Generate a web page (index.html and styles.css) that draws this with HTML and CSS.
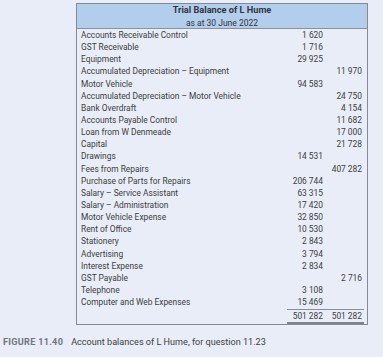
FILE: index.html
```html
<!DOCTYPE html>
<html>
<head>
<meta charset="utf-8">
<link rel="stylesheet" href="styles.css">
</head>
<body>
<div class="page">
  <div class="tb">
    <div class="tb-head">
      <div class="tb-title">Trial Balance of L Hume</div>
      <div class="tb-sub">as at 30 June 2022</div>
    </div>
    <div class="tb-body">
      <div class="row"><span class="lbl">Accounts Receivable Control</span><span class="dr">1 620</span><span class="cr"></span></div>
      <div class="row"><span class="lbl">GST Receivable</span><span class="dr">1 716</span><span class="cr"></span></div>
      <div class="row"><span class="lbl">Equipment</span><span class="dr">29 925</span><span class="cr"></span></div>
      <div class="row"><span class="lbl">Accumulated Depreciation – Equipment</span><span class="dr"></span><span class="cr">11 970</span></div>
      <div class="row"><span class="lbl">Motor Vehicle</span><span class="dr">94 583</span><span class="cr"></span></div>
      <div class="row"><span class="lbl">Accumulated Depreciation – Motor Vehicle</span><span class="dr"></span><span class="cr">24 750</span></div>
      <div class="row"><span class="lbl">Bank Overdraft</span><span class="dr"></span><span class="cr">4 154</span></div>
      <div class="row"><span class="lbl">Accounts Payable Control</span><span class="dr"></span><span class="cr">11 682</span></div>
      <div class="row"><span class="lbl">Loan from W Denmeade</span><span class="dr"></span><span class="cr">17 000</span></div>
      <div class="row"><span class="lbl">Capital</span><span class="dr"></span><span class="cr">21 728</span></div>
      <div class="row"><span class="lbl">Drawings</span><span class="dr">14 531</span><span class="cr"></span></div>
      <div class="row"><span class="lbl">Fees from Repairs</span><span class="dr"></span><span class="cr">407 282</span></div>
      <div class="row"><span class="lbl">Purchase of Parts for Repairs</span><span class="dr">206 744</span><span class="cr"></span></div>
      <div class="row"><span class="lbl">Salary – Service Assistant</span><span class="dr">63 315</span><span class="cr"></span></div>
      <div class="row"><span class="lbl">Salary – Administration</span><span class="dr">17 420</span><span class="cr"></span></div>
      <div class="row"><span class="lbl">Motor Vehicle Expense</span><span class="dr">32 850</span><span class="cr"></span></div>
      <div class="row"><span class="lbl">Rent of Office</span><span class="dr">10 530</span><span class="cr"></span></div>
      <div class="row"><span class="lbl">Stationery</span><span class="dr">2 843</span><span class="cr"></span></div>
      <div class="row"><span class="lbl">Advertising</span><span class="dr">3 794</span><span class="cr"></span></div>
      <div class="row"><span class="lbl">Interest Expense</span><span class="dr">2 834</span><span class="cr"></span></div>
      <div class="row"><span class="lbl">GST Payable</span><span class="dr"></span><span class="cr">2 716</span></div>
      <div class="row"><span class="lbl">Telephone</span><span class="dr">3 108</span><span class="cr"></span></div>
      <div class="row"><span class="lbl">Computer and Web Expenses</span><span class="dr">15 469</span><span class="cr"></span></div>
      <div class="row total"><span class="lbl"></span><span class="dr">501 282</span><span class="cr">501 282</span></div>
    </div>
  </div>
  <div class="caption"><span class="fig">FIGURE 11.40</span><span class="cap-text">Account balances of L Hume, for question 11.23</span></div>
</div>
</body>
</html>
```

FILE: styles.css
```css
html, body {
  margin: 0;
  padding: 0;
  background: #e9edf7;
}
body {
  width: 383px;
  height: 357px;
  overflow: hidden;
  font-family: Roboto, "Liberation Sans", sans-serif;
  color: #3b3d42;
}
.page {
  padding-top: 3px;
}
.tb {
  margin-left: 76px;
  width: 292px;
  box-sizing: border-box;
  border: 1px solid #858b95;
  background: #e9edf7;
}
.tb-head {
  background: #b3cdec;
  border-bottom: 1px solid #8c929c;
  height: 25px;
  display: flex;
  flex-direction: column;
  align-items: center;
  box-sizing: border-box;
}
.tb-title {
  font-weight: 700;
  font-size: 9.2px;
  line-height: 12px;
  color: #33363c;
}
.tb-sub {
  margin-top: 2px;
  font-size: 8.5px;
  line-height: 10px;
  color: #33363c;
}
.tb-body {
  padding: 0 3px 4px 3px;
}
.row {
  display: grid;
  grid-template-columns: 1fr 38px 39px;
  height: 12.15px;
  line-height: 12.15px;
  font-size: 8.4px;
}
.lbl {
  white-space: nowrap;
  padding-left: 1px;
}
.dr, .cr {
  text-align: right;
  padding-right: 2px;
  white-space: nowrap;
}
.row.total {
  height: 11px;
  line-height: 12px;
  margin-top: 0.5px;
}
.row.total .dr, .row.total .cr {
  border-top: 1px solid #8a9099;
  border-bottom: 2px solid #7d838d;
}
.caption {
  margin-top: 11px;
  padding-left: 3px;
  font-size: 9.1px;
  line-height: 12px;
  display: flex;
  gap: 8px;
}
.fig {
  font-weight: 700;
  color: #6f7580;
  letter-spacing: 0.3px;
}
.cap-text {
  color: #3b3d42;
}
```
